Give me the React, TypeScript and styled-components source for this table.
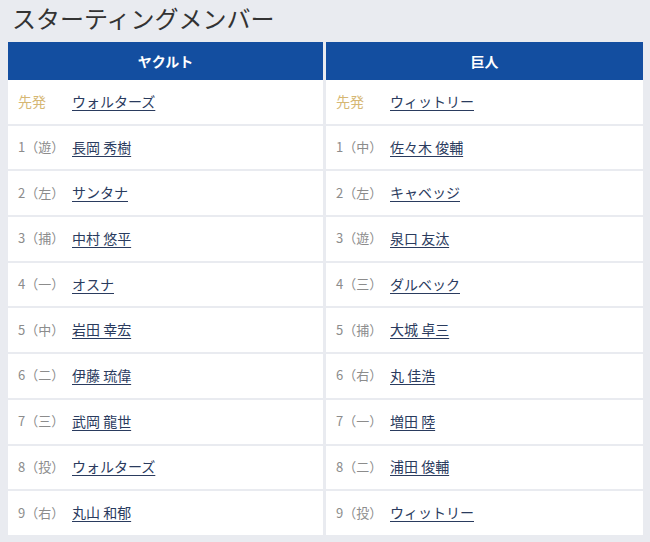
import { Fragment } from "react";
import styled, { createGlobalStyle } from "styled-components";

const GlobalStyle = createGlobalStyle`
  body {
    margin: 0;
    background: #e9ebf0;
    font-family: "Noto Sans CJK JP", "Noto Sans", sans-serif;
  }
`;

const Page = styled.div`
  width: 650px;
  height: 542px;
  overflow: hidden;
`;

const Title = styled.h1`
  margin: 0;
  padding: 0 0 0 12px;
  height: 42px;
  line-height: 35px;
  font-size: 24px;
  font-weight: 400;
  color: #333;
`;

const Table = styled.div`
  display: grid;
  grid-template-columns: 315px 317px;
  grid-template-rows: 36px repeat(10, 43.7px);
  column-gap: 3px;
  row-gap: 2px;
  margin: 0 7px 0 8px;
`;

const Head = styled.div`
  background: #134ea0;
  color: #fff;
  font-weight: 700;
  font-size: 14px;
  display: flex;
  align-items: center;
  justify-content: center;
  margin-bottom: -2px;
`;

const Cell = styled.div`
  background: #fff;
  display: flex;
  align-items: center;
  padding: 0 0 2px 10px;
`;

const Label = styled.span<{ $starter?: boolean }>`
  width: 54px;
  flex-shrink: 0;
  font-size: ${(p) => (p.$starter ? "14px" : "13px")};
  color: ${(p) => (p.$starter ? "#d6b774" : "#8c8c8c")};
  white-space: nowrap;
`;

const Name = styled.a`
  font-size: 14px;
  color: #2a3b5e;
  text-decoration: underline;
  text-underline-offset: 3px;
`;

type Player = { order: string; pos?: string; name: string };

const yakult: Player[] = [
  { order: "先発", name: "ウォルターズ" },
  { order: "1", pos: "遊", name: "長岡 秀樹" },
  { order: "2", pos: "左", name: "サンタナ" },
  { order: "3", pos: "捕", name: "中村 悠平" },
  { order: "4", pos: "一", name: "オスナ" },
  { order: "5", pos: "中", name: "岩田 幸宏" },
  { order: "6", pos: "二", name: "伊藤 琉偉" },
  { order: "7", pos: "三", name: "武岡 龍世" },
  { order: "8", pos: "投", name: "ウォルターズ" },
  { order: "9", pos: "右", name: "丸山 和郁" },
];

const giants: Player[] = [
  { order: "先発", name: "ウィットリー" },
  { order: "1", pos: "中", name: "佐々木 俊輔" },
  { order: "2", pos: "左", name: "キャベッジ" },
  { order: "3", pos: "遊", name: "泉口 友汰" },
  { order: "4", pos: "三", name: "ダルベック" },
  { order: "5", pos: "捕", name: "大城 卓三" },
  { order: "6", pos: "右", name: "丸 佳浩" },
  { order: "7", pos: "一", name: "増田 陸" },
  { order: "8", pos: "二", name: "浦田 俊輔" },
  { order: "9", pos: "投", name: "ウィットリー" },
];

function PlayerCell({ player }: { player: Player }) {
  const starter = !player.pos;
  return (
    <Cell>
      <Label $starter={starter}>
        {starter ? player.order : `${player.order}（${player.pos}）`}
      </Label>
      <Name href="#">{player.name}</Name>
    </Cell>
  );
}

export default function App() {
  return (
    <Page>
      <GlobalStyle />
      <Title>スターティングメンバー</Title>
      <Table>
        <Head>ヤクルト</Head>
        <Head>巨人</Head>
        {yakult.map((p, i) => (
          <Fragment key={i}>
            <PlayerCell player={p} />
            <PlayerCell player={giants[i]} />
          </Fragment>
        ))}
      </Table>
    </Page>
  );
}
